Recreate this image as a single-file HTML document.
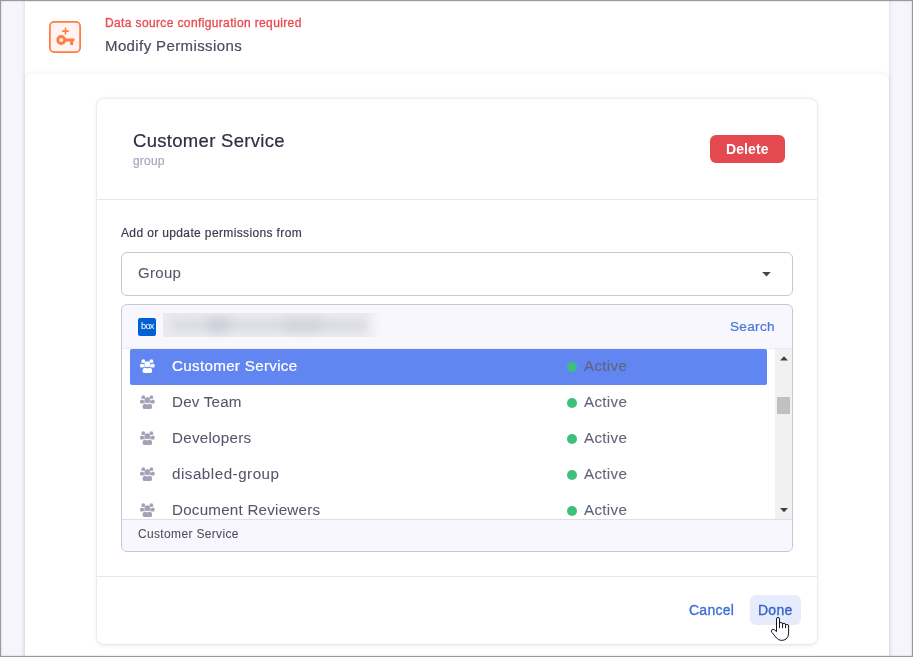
<!DOCTYPE html>
<html><head><meta charset="utf-8">
<style>
html,body{margin:0;padding:0;}
body{width:913px;height:657px;position:relative;overflow:hidden;background:#f5f5fb;font-family:"Liberation Sans",sans-serif;}
.abs{position:absolute;}
.t{position:absolute;white-space:nowrap;line-height:1;will-change:transform;-webkit-text-stroke:.2px currentColor;}
#frame{position:absolute;left:0;top:0;box-sizing:border-box;width:913px;height:657px;z-index:50;pointer-events:none;box-shadow:inset 0 0 0 1px #9a9a9a, inset 0 0 1.5px 1px rgba(120,120,120,.55);}
#panel{left:25px;top:-10px;width:864px;height:700px;background:#fff;box-shadow:0 0 4px rgba(60,60,90,.18);}
#section{left:25px;top:74px;width:864px;height:620px;background:#fff;border-radius:7px 7px 0 0;box-shadow:0 0 4px rgba(60,60,90,.10);}
#card{left:97px;top:98.5px;width:720px;height:545.5px;background:#fff;border-radius:7px;box-shadow:0 0 0 1px rgba(60,60,90,.035),0 .5px 4px rgba(60,60,90,.15);}
.hr{position:absolute;left:97px;width:720px;height:1px;background:#e7e7f3;}
#keybox{left:49px;top:21px;width:32px;height:32px;box-sizing:border-box;border:1.8px solid #ff7d45;border-radius:5px;background:#fff4f0;}
#delete{left:710px;top:135px;width:75px;height:28px;border-radius:6px;background:#e4494f;}
#select{left:121px;top:252px;width:672px;height:44px;box-sizing:border-box;border:1px solid #c6c6da;border-radius:6px;background:#fff;}
#lp{left:121px;top:304px;width:672px;height:248px;box-sizing:border-box;border:1px solid #c6c6da;border-radius:6px;background:#f7f7fd;overflow:hidden;}
#list{left:122px;top:349px;width:670px;height:170px;background:#fff;overflow:hidden;}
#sel{left:130px;top:349px;width:637px;height:36px;background:#6186f2;border-radius:2px;}
#sb{left:775px;top:349px;width:17px;height:170px;background:#f1f1f1;}
#thumb{left:777px;top:397px;width:13px;height:17px;background:#c1c1c1;}
.dot{position:absolute;width:9px;height:9px;border-radius:50%;background:#3ec07c;left:567px;}
#done{left:750px;top:595px;width:51px;height:30px;border-radius:6px;background:#e7ecfd;}
</style></head><body>
<div id="panel" class="abs"></div>
<div id="section" class="abs"></div>
<div id="card" class="abs"></div>
<div class="hr" style="top:199px"></div>
<div class="hr" style="top:576px"></div>

<svg class="abs" style="left:49px;top:21px" width="32" height="32" viewBox="0 0 32 32">
 <rect x=".9" y=".9" width="30.2" height="30.2" rx="4.2" fill="#fff4f0" stroke="#ff7d45" stroke-width="1.8"/>
 <g fill="none" stroke="#ff7d45" stroke-width="1.6" stroke-linecap="round"><path d="M16.5 7.3v5.6M13.7 10.1h5.6"/></g>
 <circle cx="12.2" cy="19" r="3.45" fill="none" stroke="#ff7d45" stroke-width="2.9"/>
 <path d="M16.5 17.6h9.1l-.5 2.9h-1v3.4h-2.9v-3.4h-4.7z" fill="#ff7d45"/>
</svg>
<div class="t" id="t1" style="-webkit-text-stroke:.35px currentColor;left:104.6px;top:17px;font-size:12px;color:#e64e54;letter-spacing:.37px">Data source configuration required</div>
<div class="t" id="t2" style="left:105px;top:38px;font-size:15px;color:#4b4b60;letter-spacing:.39px">Modify Permissions</div>

<div class="t" id="t3" style="left:133px;top:132px;font-size:18.5px;color:#2e2e45;letter-spacing:.3px">Customer Service</div>
<div class="t" id="t4" style="left:133px;top:155px;font-size:12px;color:#a8a8bc;letter-spacing:.2px">group</div>
<div id="delete" class="abs"></div>
<div class="t" id="t5" style="-webkit-text-stroke:0;left:726px;top:142px;font-size:14px;font-weight:bold;color:#fff;letter-spacing:.1px">Delete</div>

<div class="t" id="t6" style="left:121px;top:227px;font-size:12px;color:#3b3b50;letter-spacing:.365px">Add or update permissions from</div>
<div id="select" class="abs"></div>
<div class="t" id="t7" style="-webkit-text-stroke:.05px currentColor;left:138px;top:264.5px;font-size:15px;color:#55556b;letter-spacing:.3px">Group</div>
<svg class="abs" style="left:762px;top:271.5px" width="9" height="5" viewBox="0 0 9 5"><path d="M.2 0h8.6L4.5 4.6z" fill="#45455a"/></svg>

<div id="lp" class="abs"></div>
<div class="abs" style="left:122px;top:348px;width:670px;height:1px;background:#ececf5"></div>
<div class="abs" style="left:138px;top:318px;width:17.5px;height:17.5px;border-radius:2px;background:#0061d5"></div>
<div class="t" id="tbox" style="left:140.5px;top:322.4px;font-size:9.2px;color:#fff;letter-spacing:-.7px;-webkit-text-stroke:0">box</div>
<div class="abs" style="left:163px;top:313px;width:219px;height:24px;background:linear-gradient(90deg,#e9e9ef 0,#eaeaf0 92%,rgba(238,238,245,0) 100%);overflow:hidden">
<div class="abs" style="left:8px;top:7px;width:196px;height:10px;background:#d9d9e1;filter:blur(4px);border-radius:5px"></div>
<div class="abs" style="left:44px;top:5px;width:22px;height:14px;background:#cfcfd9;filter:blur(5px);border-radius:7px"></div>
<div class="abs" style="left:120px;top:6px;width:40px;height:12px;background:#d4d4dd;filter:blur(5px);border-radius:7px"></div>
</div>
<div class="t" id="t8" style="left:730px;top:319.5px;font-size:13.6px;color:#4a76da;letter-spacing:.3px">Search</div>

<div id="list" class="abs"></div>
<div id="sel" class="abs"></div>
<div id="sb" class="abs"></div>
<div id="thumb" class="abs"></div>
<svg class="abs" style="left:779.8px;top:356px" width="8" height="4.6" viewBox="0 0 9 5"><path d="M0 5h9L4.5 .2z" fill="#404040"/></svg>
<svg class="abs" style="left:779.8px;top:508px" width="8" height="4.6" viewBox="0 0 9 5"><path d="M0 0h9L4.5 4.8z" fill="#404040"/></svg>

<div class="abs" style="left:122px;top:349px;width:653px;height:170px;overflow:hidden">
<svg class="abs" style="left:17.5px;top:9.9px" width="15" height="15" viewBox="0 0 15 15" fill="#fff"><circle cx="7.35" cy="5.2" r="2.85"/><path d="M2.5 12.1C2.5 9.7 3.9 8.4 5.1 8.4C5.8 9 6.6 9.3 7.35 9.3C8.1 9.3 8.9 9 9.6 8.4C10.8 8.4 12.2 9.7 12.2 12.1C12.2 13.4 11.4 14.1 10.4 14.1H4.3C3.3 14.1 2.5 13.4 2.5 12.1z"/><circle cx="3.3" cy="2.2" r="1.9"/><circle cx="11.4" cy="2.2" r="1.9"/><path d="M0 7C0 5.4.8 4.6 1.6 4.6C2.1 5 2.7 5.2 3.3 5.2C3.6 5.2 3.9 5.15 4.2 5C4.2 6.1 4.5 7 5 7.7C4.2 7.75 3.4 8.1 2.9 8.6H1.5C.5 8.6 0 8 0 7z"/><path d="M14.7 7C14.7 5.4 13.9 4.6 13.1 4.6C12.6 5 12 5.2 11.4 5.2C11.1 5.2 10.8 5.15 10.5 5C10.5 6.1 10.2 7 9.7 7.7C10.5 7.75 11.3 8.1 11.8 8.6H13.2C14.2 8.6 14.7 8 14.7 7z"/></svg>
<div class="t rn" style="-webkit-text-stroke:.22px currentColor;left:50px;top:9px;font-size:15.2px;color:#fff;letter-spacing:.3px">Customer Service</div>
<div class="dot" style="left:445px;top:13px;width:10px;height:10px"></div>
<div class="t ra" style="-webkit-text-stroke:.08px currentColor;left:462px;top:9px;font-size:15.2px;color:#62627a;letter-spacing:.3px">Active</div>
<svg class="abs" style="left:17.5px;top:45.9px" width="15" height="15" viewBox="0 0 15 15" fill="#a3a3b8"><circle cx="7.35" cy="5.2" r="2.85"/><path d="M2.5 12.1C2.5 9.7 3.9 8.4 5.1 8.4C5.8 9 6.6 9.3 7.35 9.3C8.1 9.3 8.9 9 9.6 8.4C10.8 8.4 12.2 9.7 12.2 12.1C12.2 13.4 11.4 14.1 10.4 14.1H4.3C3.3 14.1 2.5 13.4 2.5 12.1z"/><circle cx="3.3" cy="2.2" r="1.9"/><circle cx="11.4" cy="2.2" r="1.9"/><path d="M0 7C0 5.4.8 4.6 1.6 4.6C2.1 5 2.7 5.2 3.3 5.2C3.6 5.2 3.9 5.15 4.2 5C4.2 6.1 4.5 7 5 7.7C4.2 7.75 3.4 8.1 2.9 8.6H1.5C.5 8.6 0 8 0 7z"/><path d="M14.7 7C14.7 5.4 13.9 4.6 13.1 4.6C12.6 5 12 5.2 11.4 5.2C11.1 5.2 10.8 5.15 10.5 5C10.5 6.1 10.2 7 9.7 7.7C10.5 7.75 11.3 8.1 11.8 8.6H13.2C14.2 8.6 14.7 8 14.7 7z"/></svg>
<div class="t rn" style="-webkit-text-stroke:.05px currentColor;left:50px;top:45px;font-size:15.2px;color:#55556b;letter-spacing:.2px">Dev Team</div>
<div class="dot" style="left:445px;top:49px;width:10px;height:10px"></div>
<div class="t ra" style="-webkit-text-stroke:.08px currentColor;left:462px;top:45px;font-size:15.2px;color:#62627a;letter-spacing:.3px">Active</div>
<svg class="abs" style="left:17.5px;top:81.9px" width="15" height="15" viewBox="0 0 15 15" fill="#a3a3b8"><circle cx="7.35" cy="5.2" r="2.85"/><path d="M2.5 12.1C2.5 9.7 3.9 8.4 5.1 8.4C5.8 9 6.6 9.3 7.35 9.3C8.1 9.3 8.9 9 9.6 8.4C10.8 8.4 12.2 9.7 12.2 12.1C12.2 13.4 11.4 14.1 10.4 14.1H4.3C3.3 14.1 2.5 13.4 2.5 12.1z"/><circle cx="3.3" cy="2.2" r="1.9"/><circle cx="11.4" cy="2.2" r="1.9"/><path d="M0 7C0 5.4.8 4.6 1.6 4.6C2.1 5 2.7 5.2 3.3 5.2C3.6 5.2 3.9 5.15 4.2 5C4.2 6.1 4.5 7 5 7.7C4.2 7.75 3.4 8.1 2.9 8.6H1.5C.5 8.6 0 8 0 7z"/><path d="M14.7 7C14.7 5.4 13.9 4.6 13.1 4.6C12.6 5 12 5.2 11.4 5.2C11.1 5.2 10.8 5.15 10.5 5C10.5 6.1 10.2 7 9.7 7.7C10.5 7.75 11.3 8.1 11.8 8.6H13.2C14.2 8.6 14.7 8 14.7 7z"/></svg>
<div class="t rn" style="-webkit-text-stroke:.05px currentColor;left:50px;top:81px;font-size:15.2px;color:#55556b;letter-spacing:.25px">Developers</div>
<div class="dot" style="left:445px;top:85px;width:10px;height:10px"></div>
<div class="t ra" style="-webkit-text-stroke:.08px currentColor;left:462px;top:81px;font-size:15.2px;color:#62627a;letter-spacing:.3px">Active</div>
<svg class="abs" style="left:17.5px;top:117.9px" width="15" height="15" viewBox="0 0 15 15" fill="#a3a3b8"><circle cx="7.35" cy="5.2" r="2.85"/><path d="M2.5 12.1C2.5 9.7 3.9 8.4 5.1 8.4C5.8 9 6.6 9.3 7.35 9.3C8.1 9.3 8.9 9 9.6 8.4C10.8 8.4 12.2 9.7 12.2 12.1C12.2 13.4 11.4 14.1 10.4 14.1H4.3C3.3 14.1 2.5 13.4 2.5 12.1z"/><circle cx="3.3" cy="2.2" r="1.9"/><circle cx="11.4" cy="2.2" r="1.9"/><path d="M0 7C0 5.4.8 4.6 1.6 4.6C2.1 5 2.7 5.2 3.3 5.2C3.6 5.2 3.9 5.15 4.2 5C4.2 6.1 4.5 7 5 7.7C4.2 7.75 3.4 8.1 2.9 8.6H1.5C.5 8.6 0 8 0 7z"/><path d="M14.7 7C14.7 5.4 13.9 4.6 13.1 4.6C12.6 5 12 5.2 11.4 5.2C11.1 5.2 10.8 5.15 10.5 5C10.5 6.1 10.2 7 9.7 7.7C10.5 7.75 11.3 8.1 11.8 8.6H13.2C14.2 8.6 14.7 8 14.7 7z"/></svg>
<div class="t rn" style="-webkit-text-stroke:.05px currentColor;left:50px;top:117px;font-size:15.2px;color:#55556b;letter-spacing:.5px">disabled-group</div>
<div class="dot" style="left:445px;top:121px;width:10px;height:10px"></div>
<div class="t ra" style="-webkit-text-stroke:.08px currentColor;left:462px;top:117px;font-size:15.2px;color:#62627a;letter-spacing:.3px">Active</div>
<svg class="abs" style="left:17.5px;top:153.9px" width="15" height="15" viewBox="0 0 15 15" fill="#a3a3b8"><circle cx="7.35" cy="5.2" r="2.85"/><path d="M2.5 12.1C2.5 9.7 3.9 8.4 5.1 8.4C5.8 9 6.6 9.3 7.35 9.3C8.1 9.3 8.9 9 9.6 8.4C10.8 8.4 12.2 9.7 12.2 12.1C12.2 13.4 11.4 14.1 10.4 14.1H4.3C3.3 14.1 2.5 13.4 2.5 12.1z"/><circle cx="3.3" cy="2.2" r="1.9"/><circle cx="11.4" cy="2.2" r="1.9"/><path d="M0 7C0 5.4.8 4.6 1.6 4.6C2.1 5 2.7 5.2 3.3 5.2C3.6 5.2 3.9 5.15 4.2 5C4.2 6.1 4.5 7 5 7.7C4.2 7.75 3.4 8.1 2.9 8.6H1.5C.5 8.6 0 8 0 7z"/><path d="M14.7 7C14.7 5.4 13.9 4.6 13.1 4.6C12.6 5 12 5.2 11.4 5.2C11.1 5.2 10.8 5.15 10.5 5C10.5 6.1 10.2 7 9.7 7.7C10.5 7.75 11.3 8.1 11.8 8.6H13.2C14.2 8.6 14.7 8 14.7 7z"/></svg>
<div class="t rn" style="-webkit-text-stroke:.05px currentColor;left:50px;top:153px;font-size:15.2px;color:#55556b;letter-spacing:.22px">Document Reviewers</div>
<div class="dot" style="left:445px;top:157px;width:10px;height:10px"></div>
<div class="t ra" style="-webkit-text-stroke:.08px currentColor;left:462px;top:153px;font-size:15.2px;color:#62627a;letter-spacing:.3px">Active</div>
</div>
<div class="abs" style="left:122px;top:519px;width:670px;height:1px;background:#dedeee"></div>
<div class="abs" style="left:122px;top:520px;width:670px;height:31px;background:#f7f7fd;border-radius:0 0 5px 5px"></div>
<div class="t" id="t9" style="-webkit-text-stroke:.05px currentColor;left:138px;top:528px;font-size:12px;color:#4b4b60;letter-spacing:.34px">Customer Service</div>

<div class="t" id="t10" style="-webkit-text-stroke:.35px currentColor;left:689px;top:603px;font-size:14px;color:#3f6ed3;letter-spacing:.25px">Cancel</div>
<div id="done" class="abs"></div>
<div class="t" id="t11" style="-webkit-text-stroke:.35px currentColor;left:758px;top:603px;font-size:14px;color:#3565c9;letter-spacing:.25px">Done</div>
<svg class="abs" style="left:770px;top:616px;z-index:40" width="22" height="28" viewBox="0 0 22 28">
 <path d="M6.5 15.6V3Q6.5 1.4 8 1.4Q9.5 1.4 9.5 3V7.2Q9.7 6.5 11 6.5Q12.5 6.5 12.55 7.8Q12.8 7.4 14 7.4Q15.5 7.4 15.55 8.8Q15.8 8.4 17.1 8.4Q18.6 8.4 18.6 10V17Q18.6 21 16.2 23Q14.2 24.4 11.2 24.4Q8.5 24.2 6.5 22L1.8 16.3Q.8 15 1.8 13.9Q2.9 12.8 4.2 13.7z" fill="#fff" stroke="#15151f" stroke-width="1" stroke-linejoin="round"/>
 <path d="M9.5 7V11.8M12.55 7.8V11.8M15.55 8.8V11.8" fill="none" stroke="#15151f" stroke-width="1" stroke-linecap="round"/>
</svg>
<div id="frame"></div>
</body></html>
